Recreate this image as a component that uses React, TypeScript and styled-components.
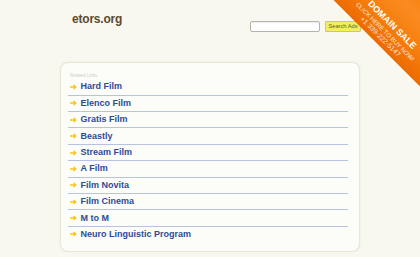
import React from 'react';
import styled, { createGlobalStyle } from 'styled-components';

const GlobalStyle = createGlobalStyle`
  html, body {
    margin: 0;
    padding: 0;
    background: #f8f8f1;
    font-family: "Liberation Sans", Arial, sans-serif;
    overflow: hidden;
  }
`;

const Page = styled.div`
  width: 300px;
  margin: 0 auto;
`;

const Header = styled.header`
  display: flex;
  justify-content: space-between;
  align-items: flex-start;
  box-sizing: border-box;
  height: 62px;
  padding-top: 12px;
`;

const Domain = styled.h1`
  margin: 0 0 0 12px;
  font-size: 12px;
  line-height: 14px;
  font-weight: 700;
  color: #5a4a30;
  letter-spacing: -0.2px;
`;

const SearchForm = styled.form`
  display: flex;
  align-items: center;
  gap: 5px;
  margin-top: 9px;
  margin-right: -1px;
`;

const SearchInput = styled.input`
  box-sizing: border-box;
  width: 70px;
  height: 11px;
  padding: 0;
  border: 1px solid #b4b4ac;
  border-radius: 2px;
  background: #fff;
  box-shadow: inset 0 1px 1px rgba(0, 0, 0, 0.08);
`;

const SearchButton = styled.button`
  box-sizing: border-box;
  width: 36px;
  height: 11px;
  padding: 0;
  border: 1px solid #c9c48a;
  border-radius: 1px;
  background: #f2ee5c;
  color: #5d5d40;
  font-family: "Liberation Sans", Arial, sans-serif;
  font-size: 5.7px;
  line-height: 9px;
`;

const Card = styled.section`
  box-sizing: border-box;
  height: 190px;
  padding: 9.5px 10px 0 6.5px;
  border: 1.5px solid #e7e7d4;
  border-radius: 8px;
  background: #fcfcf8;
  box-shadow: 0 0 2px rgba(200, 200, 170, 0.35);
`;

const LinkList = styled.ul`
  width: 280px;
  margin: 0;
  padding: 0;
  list-style: none;
`;

const ListLabel = styled.div`
  height: 6.8px;
  padding-left: 2.5px;
  font-size: 4.5px;
  line-height: 6px;
  color: #cfcfc6;
`;

const Row = styled.li`
  display: flex;
  align-items: center;
  gap: 4px;
  box-sizing: border-box;
  height: 16.4px;
  padding-left: 2px;
  border-bottom: 1.5px solid #b8c3e2;

  &:last-child {
    border-bottom: none;
    height: 14.9px;
  }
`;

const RowLink = styled.a`
  font-size: 9px;
  line-height: 11px;
  font-weight: 700;
  color: #2d4b98;
  text-decoration: none;
`;

const Corner = styled.div`
  position: absolute;
  top: 0;
  right: 0;
  width: 120px;
  height: 120px;
  overflow: hidden;
  pointer-events: none;
`;

const Ribbon = styled.div`
  position: absolute;
  left: 0;
  top: -18px;
  width: 200px;
  height: 70px;
  box-sizing: border-box;
  padding-bottom: 3.75px;
  display: flex;
  flex-direction: column;
  justify-content: flex-end;
  align-items: center;
  transform: rotate(45deg);
  background: linear-gradient(to top, #ec6a00 0%, #f57d0c 30%, #fb8c22 70%, #f67c0a 100%);
  color: #fff;
  text-align: center;
`;

const RibbonTitle = styled.div`
  font-size: 9px;
  line-height: 10px;
  font-weight: 700;
  margin-bottom: 2.25px;
  letter-spacing: 0.1px;
`;

const RibbonLine = styled.div<{ $size: number }>`
  font-size: ${({ $size }) => $size}px;
  line-height: 6.5px;
  opacity: 0.82;
  white-space: nowrap;
`;

function Arrow() {
  return (
    <svg width="7" height="6" viewBox="0 0 7 6">
      <path d="M0 3 H5.6 M3.6 0.9 L5.8 3 L3.6 5.1" fill="none" stroke="#f4c41c" strokeWidth="1.3" />
    </svg>
  );
}

const links = [
  'Hard Film',
  'Elenco Film',
  'Gratis Film',
  'Beastly',
  'Stream Film',
  'A Film',
  'Film Novita',
  'Film Cinema',
  'M to M',
  'Neuro Linguistic Program',
];

export default function App() {
  return (
    <>
      <GlobalStyle />
      <Page>
        <Header>
          <Domain>etors.org</Domain>
          <SearchForm onSubmit={(e) => e.preventDefault()}>
            <SearchInput type="text" />
            <SearchButton type="submit">Search Ads</SearchButton>
          </SearchForm>
        </Header>
        <Card>
          <LinkList>
            <ListLabel>Related Links</ListLabel>
            {links.map((link) => (
              <Row key={link}>
                <Arrow />
                <RowLink href="#">{link}</RowLink>
              </Row>
            ))}
          </LinkList>
        </Card>
      </Page>
      <Corner>
        <Ribbon>
          <RibbonTitle>DOMAIN SALE</RibbonTitle>
          <RibbonLine $size={6.2}>CLICK HERE TO BUY NOW!</RibbonLine>
          <RibbonLine $size={7}>+1 339-222-5147</RibbonLine>
        </Ribbon>
      </Corner>
    </>
  );
}
